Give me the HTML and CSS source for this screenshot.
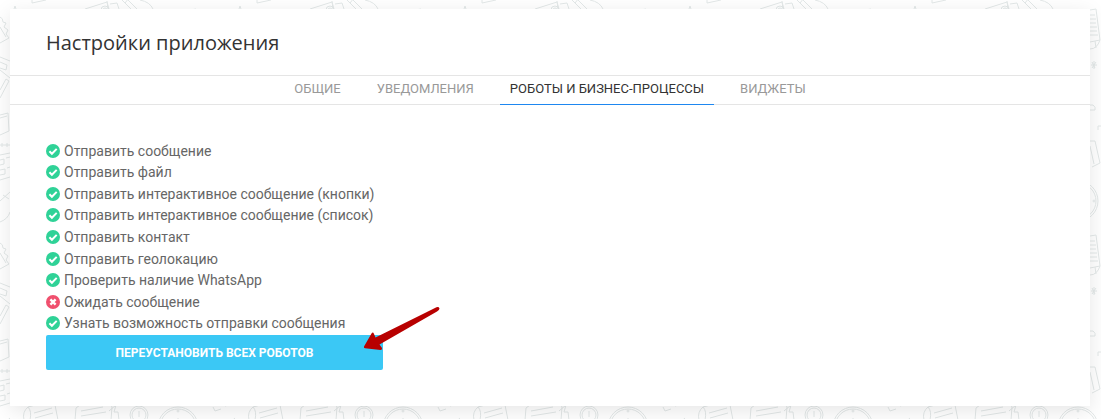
FILE: index.html
```
<!DOCTYPE html>
<html lang="ru">
<head>
<meta charset="utf-8">
<title>Настройки приложения</title>
<link rel="stylesheet" href="styles.css">
</head>
<body>
<svg class="backdrop" aria-hidden="true">
  <defs>
    <pattern id="doodles" width="225" height="226" patternUnits="userSpaceOnUse">
      <g fill="none" stroke="#e3e8e8" stroke-width="1">
        <path d="M32 0v3l14-3M85 9l22-7 2 7M107 1l1 8M110 4l7-1 2 6M122 0l9 9M125 3l4-5M128 0l9 9M140 0q10 2 13 9M14 9l1-3 1 3"/>
        <circle cx="105" cy="10" r="4"/><circle cx="105" cy="10" r="2"/>
        <path d="M0 17q3 1 3 5l3 1-2 4 4 3-2 4 3 4-9 5M0 27l6 10M0 57l10 4M0 62l7 3-1 5-6-2M0 70l10 8M0 98L9 81l-3-2L0 90M0 115l8-2 1 18-9 4M0 118l7-2M0 145h10M2 143v4M7 143v4"/>
        <path d="M0 155l10-2M0 160l4-1v5l-4 1M6 158l4-1M0 170l5-1v5l-5 1M7 168l3-1M0 180l10-3M0 201l10-9M3 195l6 4M0 222q8-3 10-10"/>
        <path d="M24 194q-2-8 4-13l26-7 4 20M28 181q4 4 2 13M34 187l18-5M35 192l18-5M75 194l1-12 4-3 29-4 3 6-1 13M81 185l22-4M81 190l25-4M109 185l7-6-2 7h4l1 8M213 181l2 4 6-2"/>
        <circle cx="139" cy="189" r="9"/><circle cx="139" cy="189" r="7"/><path d="M139 185v6"/>
        <circle cx="178" cy="201" r="20"/><circle cx="178" cy="201" r="18"/><circle cx="178" cy="185" r="1"/><circle cx="194" cy="201" r="1"/><path d="M178 192v9"/>
        <path d="M190 10l6-1 4 31q-3 9-10 9M190 42l10-2M195 41l1 7M190 15h5M190 19h6M190 23h6M190 27h7M190 31h7M190 35h8M192 62l3 6M196 62l-4 6M191 65h6M194 61v8M190 105h3q3 2 2 5h-5M198 130v-4h3M190 141h5l5 22-8 4M190 146l4 18"/>
      </g>
    </pattern>
  </defs>
  <rect width="100%" height="100%" fill="url(#doodles)"/>
</svg>
<main class="card">
  <h1 class="title">Настройки приложения</h1>
  <nav class="tabs">
    <a class="tab" href="#general">Общие</a>
    <a class="tab" href="#notifications">Уведомления</a>
    <a class="tab tab-active" href="#robots" aria-current="page">Роботы и бизнес-процессы</a>
    <a class="tab" href="#widgets">Виджеты</a>
  </nav>
  <svg class="sprite" aria-hidden="true">
    <symbol id="ok" viewBox="0 0 14 14"><circle cx="7" cy="7" r="7" fill="#2fd297"/><path d="M3.4 7.3l2.5 2.5 4.8-4.9" fill="none" stroke="#fff" stroke-width="2"/></symbol>
    <symbol id="fail" viewBox="0 0 14 14"><circle cx="7" cy="7" r="7" fill="#f0506e"/><path d="M4.4 4.4l5.2 5.2M9.6 4.4L4.4 9.6" stroke="#fff" stroke-width="2.4"/></symbol>
  </svg>
  <section class="content">
    <ul class="robots">
      <li class="robot"><svg class="status"><use href="#ok"/></svg>Отправить сообщение</li>
      <li class="robot"><svg class="status"><use href="#ok"/></svg>Отправить файл</li>
      <li class="robot"><svg class="status"><use href="#ok"/></svg>Отправить интерактивное сообщение (кнопки)</li>
      <li class="robot"><svg class="status"><use href="#ok"/></svg>Отправить интерактивное сообщение (список)</li>
      <li class="robot"><svg class="status"><use href="#ok"/></svg>Отправить контакт</li>
      <li class="robot"><svg class="status"><use href="#ok"/></svg>Отправить геолокацию</li>
      <li class="robot"><svg class="status"><use href="#ok"/></svg>Проверить наличие WhatsApp</li>
      <li class="robot"><svg class="status"><use href="#fail"/></svg>Ожидать сообщение</li>
      <li class="robot"><svg class="status"><use href="#ok"/></svg>Узнать возможность отправки сообщения</li>
    </ul>
    <button class="reinstall" type="button">Переустановить всех роботов</button>
    <svg class="arrow" viewBox="0 0 78 45" aria-hidden="true"><path d="M1 40.5L8.5 27.5Q10 25.5 11 28L12.5 31.5L73.5 1.2Q76 .6 76.5 2.5Q76.5 4 74 5.5L16.5 38.5L19 42Q19.5 44 17.5 44L2 42.2Q.5 42 1 40.5Z"/></svg>
  </section>
</main>
</body>
</html>
```
FILE: styles.css
```
* {
  box-sizing: border-box;
}

body {
  margin: 0;
  padding: 9px 11px 13px 10px;
  min-height: 100vh;
  display: flex;
  background: #fff;
  color: #666;
  font-family: Roboto, sans-serif;
}

.backdrop {
  position: absolute;
  inset: 0;
  width: 100%;
  height: 100%;
}

.sprite {
  position: absolute;
  width: 0;
  height: 0;
}

.card {
  position: relative;
  flex: 1;
  background: #fff;
  box-shadow: 0 5px 20px rgba(0, 0, 0, 0.1);
}

.title {
  margin: 0;
  padding: 18px 36px 16px;
  color: #333;
  font: 400 20px/32px "Open Sans", sans-serif;
}

.tabs {
  display: flex;
  justify-content: center;
  gap: 16px;
  border: solid #e5e5e5;
  border-width: 1px 0;
}

.tab {
  margin-bottom: -1px;
  padding: 3px 10px 5px;
  border-bottom: 1px solid transparent;
  color: #999;
  font-size: 13px;
  line-height: 20px;
  text-decoration: none;
  text-transform: uppercase;
}

.tab-active {
  border-color: #1e87f0;
  color: #333;
}

.content {
  position: relative;
  width: fit-content;
  min-width: 409px;
  padding: 35px 36px 36px;
}

.robots {
  display: grid;
  grid-auto-rows: 1fr;
  height: 194px;
  margin: 0 0 1px;
  padding: 0;
  list-style: none;
  font-size: 14px;
}

.robot {
  display: flex;
  align-items: center;
  gap: 4px;
  white-space: nowrap;
}

.status {
  width: 14px;
  height: 14px;
}

.reinstall {
  width: 100%;
  height: 35px;
  border: 0;
  border-radius: 2px;
  background: #3bc8f5;
  color: #fff;
  font: 700 12px/16px Roboto, sans-serif;
  text-transform: uppercase;
}

.arrow {
  position: absolute;
  right: -22px;
  bottom: 55px;
  width: 78px;
  height: 45px;
  fill: #b80000;
}
```
